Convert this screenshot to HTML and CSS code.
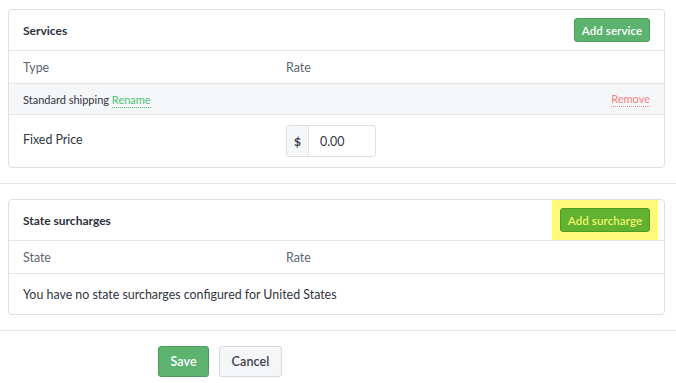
FILE: index.html
```html
<!DOCTYPE html>
<html>
<head>
<meta charset="utf-8">
<link rel="stylesheet" href="styles.css">
</head>
<body>
<div class="section first">
  <div class="card">
    <div class="card-head">
      <span class="card-title">Services</span>
      <button class="btn btn-green">Add service</button>
    </div>
    <div class="row cols">
      <span class="col-label muted">Type</span>
      <span class="muted">Rate</span>
    </div>
    <div class="row sub">
      <span class="sub-name">Standard shipping <a class="link-green">Rename</a></span>
      <a class="link-red">Remove</a>
    </div>
    <div class="row price">
      <span class="col-label">Fixed Price</span>
      <div class="input-group">
        <span class="addon">$</span>
        <span class="input-val">0.00</span>
      </div>
    </div>
  </div>
</div>
<div class="section">
  <div class="card">
    <div class="card-head">
      <span class="card-title">State surcharges</span>
      <span class="highlight"><button class="btn btn-lime">Add surcharge</button></span>
    </div>
    <div class="row cols">
      <span class="col-label muted">State</span>
      <span class="muted">Rate</span>
    </div>
    <div class="row empty">
      <span>You have no state surcharges configured for United States</span>
    </div>
  </div>
</div>
<div class="actions">
  <button class="btn btn-save">Save</button>
  <button class="btn btn-cancel">Cancel</button>
</div>
</body>
</html>
```
FILE: styles.css
```css
* { box-sizing: border-box; }
html, body { margin: 0; padding: 0; background: #fff; }
body {
  font-family: Lato, "Open Sans", sans-serif;
  color: #2f3541;
  font-size: 12.4px;
  width: 676px;
  height: 383px;
  overflow: hidden;
}
.section {
  padding: 15px 11px 15px 8px;
  border-bottom: 1px solid #e4e6ea;
}
.section.first { padding-top: 9px; }
.card {
  border: 1px solid #dcdfe4;
  border-radius: 4px;
  overflow: hidden;
}
.card-head {
  height: 41px;
  display: flex;
  align-items: center;
  justify-content: space-between;
  padding: 0 14px;
  border-bottom: 1px solid #e4e6ea;
}
.card-title { font-weight: 700; font-size: 12px; color: #2b313c; }
.row {
  display: flex;
  align-items: center;
  padding: 0 14px;
  border-bottom: 1px solid #e4e6ea;
}
.row:last-child { border-bottom: none; }
.cols { height: 33px; }
.col-label { width: 263px; flex: none; }
.muted { color: #5c6573; }
.sub {
  height: 31px;
  background: #f5f6f8;
  justify-content: space-between;
  font-size: 11px;
  padding-top: 1px;
}
.sub-name { color: #2f3541; }
.link-green {
  color: #4ec27a;
  border-bottom: 1px dotted #4ec27a;
  padding-bottom: 1px;
}
.link-red {
  color: #f28383;
  border-bottom: 1px dotted #f28383;
  padding-bottom: 1px;
}
.price { height: 52px; align-items: flex-start; padding-top: 10px; }
.price .col-label { line-height: 30px; }
.input-group {
  display: flex;
  height: 32px;
  width: 90px;
  border: 1px solid #dcdfe4;
  border-radius: 3px;
  overflow: hidden;
}
.addon {
  width: 22px;
  background: #f5f6f8;
  border-right: 1px solid #e4e6ea;
  display: flex;
  align-items: center;
  justify-content: center;
  font-size: 12px;
  font-weight: 700;
  color: #3a404c;
}
.input-val {
  display: flex;
  align-items: center;
  padding-left: 11px;
  color: #2f3541;
}
.empty { height: 40px; }
.btn {
  font-family: inherit;
  border-radius: 3px;
  font-size: 11.5px;
  font-weight: 600;
  cursor: pointer;
  letter-spacing: 0.1px;
}
.btn-green {
  height: 24px;
  width: 76px;
  padding: 0;
  background: #5cb370;
  border: 1px solid #4b9d5e;
  color: #fff;
}
.highlight {
  background: #fff87a;
  padding: 8px 8px;
  margin-right: -8px;
  display: flex;
}
.btn-lime {
  height: 24px;
  width: 90px;
  padding: 0;
  background: #61b230;
  border: 1px solid #4e9b24;
  color: #f2f56e;
}
.actions {
  display: flex;
  gap: 10px;
  padding: 15px 0 0 158px;
}
.btn-save {
  height: 31px;
  width: 51px;
  background: #5cb370;
  border: 1px solid #4b9d5e;
  color: #fff;
  font-size: 12.5px;
}
.btn-cancel {
  height: 31px;
  width: 63px;
  background: #f5f6f8;
  border: 1px solid #d6d9de;
  color: #3a404c;
  font-size: 12.5px;
}
```
